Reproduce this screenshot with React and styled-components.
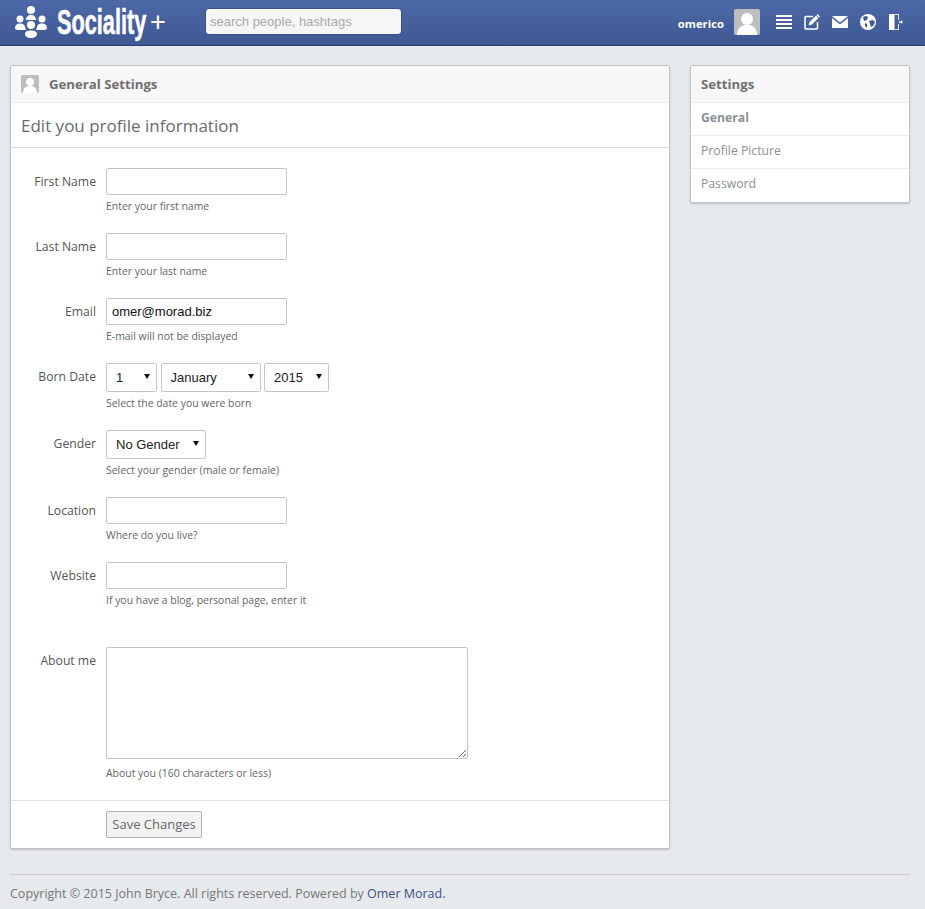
import React from 'react';
import styled, { createGlobalStyle } from 'styled-components';

const Global = createGlobalStyle`
  html, body { margin: 0; padding: 0; background: #e7eaec; }
  body { font-family: "Open Sans", "Liberation Sans", sans-serif; color: #555; }
  * { box-sizing: border-box; }
`;

const Header = styled.header`
  height: 46px;
  display: flex;
  align-items: center;
  padding: 0 21px 1px 15px;
  background: linear-gradient(#4d68a7, #3f5894);
  border-bottom: 1px solid #2b3f74;
`;
const Brand = styled.div`
  display: flex;
  align-items: center;
  width: 190px;
`;
const BrandName = styled.span`
  display: block;
  width: 88px;
  margin-left: 10px;
  color: #fff;
  font: bold 35px/44px "Liberation Sans", sans-serif;
  -webkit-text-stroke: 0.6px #fff;
  transform: scaleX(0.62);
  transform-origin: left center;
  white-space: nowrap;
`;
const BrandPlus = styled.span`
  display: block;
  margin-left: 5px;
  color: #fff;
  font: 400 27px/44px "Liberation Sans", sans-serif;
`;
const Search = styled.input`
  width: 197px;
  height: 27px;
  margin-bottom: 1px;
  border: 1px solid #3a5089;
  border-radius: 4px;
  background: #f6f6f6;
  padding: 0 4px;
  font: 13px "Liberation Sans", Arial, sans-serif;
  outline: none;
  &::placeholder { color: #aaa; opacity: 1; }
`;
const UserArea = styled.div`
  margin-left: auto;
  display: flex;
  align-items: center;
`;
const UserName = styled.span`
  color: #fff;
  font: bold 11.3px "Open Sans", sans-serif;
  margin: 2px 10px 0 0;
`;
const Icons = styled.div`
  display: flex;
  align-items: center;
  gap: 12px;
  margin-left: 16px;
`;
const Avatar = styled.svg`
  display: block;
  border-radius: 2px;
  background: #bdbdbd;
`;
const Main = styled.main`
  display: flex;
  align-items: flex-start;
  gap: 20px;
  padding: 19px 15px 0 10px;
`;
const Panel = styled.section`
  width: ${p => p.$w}px;
  background: #fff;
  border: 1px solid #c4c4c4;
  border-radius: 2px;
  box-shadow: 0 1px 2px rgba(0,0,0,.2);
  overflow: hidden;
`;
const PanelHead = styled.div`
  height: 37px;
  display: flex;
  align-items: center;
  gap: 10px;
  padding: 0 10px;
  background: #f7f7f7;
  border-bottom: 1px solid #eee;
  font: bold 13.2px "Open Sans", sans-serif;
  color: #6f6f6f;
`;
const Title = styled.h2`
  margin: 0;
  height: 45px;
  padding: 0 10px;
  font: 400 17px/45px "Open Sans", sans-serif;
  color: #6a6a6a;
  border-bottom: 1px solid #ddd;
`;
const Form = styled.form`
  padding: 20px 0 0;
`;
const Row = styled.div`
  display: grid;
  grid-template-columns: 85px 1fr;
  column-gap: 10px;
  margin-bottom: ${p => p.$mb ?? 19}px;
`;
const Label = styled.label`
  text-align: right;
  font-size: 12.2px;
  line-height: 27px;
  color: #555;
`;
const Field = styled.div``;
const TextInput = styled.input`
  display: block;
  width: 181px;
  height: 27px;
  border: 1px solid #c6c6c6;
  border-radius: 2px;
  padding: 0 5px;
  font: 13px "Liberation Sans", Arial, sans-serif;
  color: #111;
  outline: none;
`;
const Area = styled.textarea`
  display: block;
  width: 362px;
  height: 112px;
  border: 1px solid #c6c6c6;
  border-radius: 2px;
  outline: none;
`;
const Help = styled.div`
  margin-top: ${p => p.$top ?? 3}px;
  font-size: 10.45px;
  line-height: 16px;
  color: #666;
`;
const Selects = styled.div`
  display: flex;
  gap: 3.5px;
`;
const SelectWrap = styled.div`
  position: relative;
  width: ${p => p.$w}px;
  height: 29px;
  &::after {
    content: "";
    position: absolute;
    right: 7px;
    top: 11px;
    border-left: 3px solid transparent;
    border-right: 3px solid transparent;
    border-top: 5px solid #111;
    pointer-events: none;
  }
`;
const Select = styled.select`
  appearance: none;
  width: 100%;
  height: 100%;
  background: #fff;
  border: 1px solid #c6c6c6;
  border-radius: 2px;
  padding: 0 9px 0;
  font: 13px "Liberation Sans", Arial, sans-serif;
  color: #222;
  outline: none;
`;
const Actions = styled.div`
  border-top: 1px solid #e2e2e2;
  padding: 10px 0 10px 95px;
`;
const Save = styled.button`
  height: 27px;
  width: 96px;
  padding: 0 0 2px;
  border: 1px solid #b4b4b4;
  border-radius: 2px;
  background: #f2f2f2;
  font: 13px "Open Sans", sans-serif;
  color: #666;
`;
const SideItem = styled.div`
  height: 33px;
  padding: 0 10px;
  font-size: 12.2px;
  font-weight: ${p => p.$active ? 700 : 400};
  line-height: 30px;
  color: #8a8f99;
  border-bottom: ${p => p.$last ? 'none' : '1px solid #eee'};
`;
const Footer = styled.footer`
  margin: 25px 15px 0 10px;
  border-top: 1px solid #ccc;
  padding-top: 10px;
  font-size: 12.5px;
  line-height: 18px;
  color: #777;
  height: 33px;
`;
const Link = styled.a`
  color: #3d4f88;
`;

const AvatarIcon = ({ s }) => (
  <Avatar width={s} height={s} viewBox="0 0 26 26">
    <circle cx="13" cy="10" r="6" fill="#fff" />
    <path d="M3 26c0-7 4-9 7-10h6c3 1 7 3 7 10z" fill="#fff" />
  </Avatar>
);

const Logo = () => (
  <svg width="32" height="32" viewBox="0 0 32 32" fill="#fff">
    <circle cx="16" cy="4" r="4" />
    <path d="M11 14c0-3 2-5 5-5s5 2 5 5z" />
    <circle cx="5" cy="13" r="3.500" />
    <circle cx="27" cy="13" r="3.500" />
    <path d="M0 22c0-3 2-4.500 5-4.500 2 0 3.500.5 4.500 2L11 24H3c-2 0-3-1-3-2z" />
    <path d="M32 22c0-3-2-4.500-5-4.500-2 0-3.500.5-4.500 2L21 24h8c2 0 3-1 3-2z" />
    <circle cx="16" cy="19" r="4" />
    <path d="M10 28c0-2.500 2.500-3.500 6-3.500s6 1 6 3.500-3 4-6 4-6-1.500-6-4z" />
  </svg>
);

const MenuIcon = () => (
  <svg width="16" height="14" viewBox="0 0 16 14" fill="#fff">
    <rect y="0" width="16" height="2" /><rect y="4" width="16" height="2" />
    <rect y="8" width="16" height="2" /><rect y="12" width="16" height="2" />
  </svg>
);
const EditIcon = () => (
  <svg width="16" height="16" viewBox="0 0 16 16">
    <path d="M9 2.500H2a1 1 0 0 0-1 1V14a1 1 0 0 0 1 1h10.500a1 1 0 0 0 1-1V8" fill="none" stroke="#fff" strokeWidth="1.600" />
    <path d="M4.500 11.500l1-3.500 6.500-6.500 2.500 2.500-6.500 6.500z" fill="#fff" />
    <path d="M12.500 1l1-1 2.500 2.500-1 1z" fill="#fff" />
  </svg>
);
const MailIcon = () => (
  <svg width="16" height="12" viewBox="0 0 16 12" fill="#fff">
    <path d="M0 0h16L8 6.500z" /><path d="M0 2l8 6.500L16 2v10H0z" />
  </svg>
);
const GlobeIcon = () => (
  <svg width="16" height="16" viewBox="0 0 16 16">
    <circle cx="8" cy="8" r="8" fill="#fff" />
    <path d="M3 3l3-1 2 1-1 3-3 1zM9 7l4-1 2 2-2 4-2 1-1-3zM5 9l2 1 0 4-2-2z" fill="#3f5894" />
  </svg>
);
const ExitIcon = () => (
  <svg width="16" height="16" viewBox="0 0 16 16">
    <path d="M1 0h5.500v16H1z" fill="#fff" />
    <path d="M6.500 0H11v1H6.500zM6.500 15H11v1H6.500zM10 1h1v5h-1zM10 10h1v5h-1z" fill="#dfe4f0" />
    <path d="M11 7.300h2V6l2 2-2 2V8.700h-2z" fill="#fff" />
  </svg>
);

const InputRow = ({ label, help, value }) => (
  <Row>
    <Label>{label}</Label>
    <Field>
      <TextInput defaultValue={value} />
      <Help>{help}</Help>
    </Field>
  </Row>
);

const Sel = ({ w, value }) => (
  <SelectWrap $w={w}>
    <Select defaultValue={value}><option>{value}</option></Select>
  </SelectWrap>
);

export default function App() {
  return (
    <>
      <Global />
      <Header>
        <Brand>
          <Logo />
          <BrandName>Sociality</BrandName>
          <BrandPlus>+</BrandPlus>
        </Brand>
        <Search placeholder="search people, hashtags" />
        <UserArea>
          <UserName>omerico</UserName>
          <AvatarIcon s={26} />
          <Icons>
            <MenuIcon /><EditIcon /><MailIcon /><GlobeIcon /><ExitIcon />
          </Icons>
        </UserArea>
      </Header>
      <Main>
        <Panel $w={660}>
          <PanelHead><AvatarIcon s={18} />General Settings</PanelHead>
          <Title>Edit you profile information</Title>
          <Form>
            <InputRow label="First Name" help="Enter your first name" />
            <InputRow label="Last Name" help="Enter your last name" />
            <InputRow label="Email" help="E-mail will not be displayed" value="omer@morad.biz" />
            <Row>
              <Label>Born Date</Label>
              <Field>
                <Selects>
                  <Sel w={51} value="1" />
                  <Sel w={100} value="January" />
                  <Sel w={65} value="2015" />
                </Selects>
                <Help>Select the date you were born</Help>
              </Field>
            </Row>
            <Row>
              <Label>Gender</Label>
              <Field>
                <Sel w={100} value="No Gender" />
                <Help>Select your gender (male or female)</Help>
              </Field>
            </Row>
            <InputRow label="Location" help="Where do you live?" />
            <Row $mb={39}>
              <Label>Website</Label>
              <Field>
                <TextInput />
                <Help>If you have a blog, personal page, enter it</Help>
              </Field>
            </Row>
            <Row>
              <Label>About me</Label>
              <Field>
                <Area />
                <Help $top={6}>About you (160 characters or less)</Help>
              </Field>
            </Row>
            <Actions><Save type="button">Save Changes</Save></Actions>
          </Form>
        </Panel>
        <Panel $w={220}>
          <PanelHead>Settings</PanelHead>
          <SideItem $active>General</SideItem>
          <SideItem>Profile Picture</SideItem>
          <SideItem $last>Password</SideItem>
        </Panel>
      </Main>
      <Footer>Copyright © 2015 John Bryce. All rights reserved. Powered by <Link>Omer Morad.</Link></Footer>
    </>
  );
}
